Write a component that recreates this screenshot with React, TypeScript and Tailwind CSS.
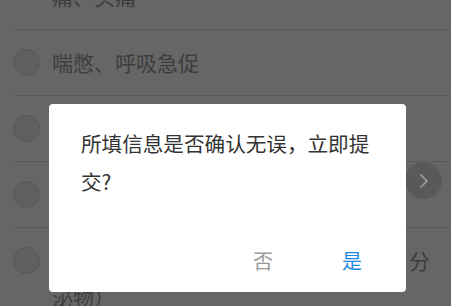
import React from "react";

const font = { fontFamily: '"Noto Sans CJK SC", "Noto Sans", sans-serif' };

function Radio() {
  return (
    <span className="mt-[5px] h-[27px] w-[27px] shrink-0 rounded-full border border-[#dadada] bg-[#eeeeee]" />
  );
}

function Row({ lines }: { lines: string[] }) {
  return (
    <div className="ml-[13px] flex gap-[12px] border-b border-[#e2e2e2] py-[14px] pr-[12px]">
      <Radio />
      <div className="text-[21px] leading-[37px] text-[#999999]">
        {lines.map((l, i) => (
          <div key={i} className="whitespace-nowrap">
            {l}
          </div>
        ))}
      </div>
    </div>
  );
}

export default function App() {
  return (
    <div className="relative h-[306px] w-[451px] overflow-hidden bg-white" style={font}>
      <div className="-mt-[73px]">
        <Row lines={["发热、寒战、乏力、肌肉酸痛、咽喉疼", "痛、头痛"]} />
        <Row lines={["喘憋、呼吸急促"]} />
        <Row lines={["咳嗽、咳痰、胸闷"]} />
        <Row lines={["腹泻、恶心、呕吐"]} />
        <Row lines={["其他症状（如结膜充血、皮疹、异常、分", "泌物）"]} />
      </div>

      <div className="absolute inset-0 bg-black/60" />

      <button className="absolute left-[405px] top-[162px] flex h-[37px] w-[37px] items-center justify-center rounded-full bg-black/[0.12]">
        <svg width="10" height="16" viewBox="0 0 10 16" fill="none">
          <path d="M1.5 1.5 L8 8 L1.5 14.5" stroke="#a0a0a0" strokeWidth="1.6" />
        </svg>
      </button>

      <div className="absolute left-[49px] top-[104px] flex h-[188px] w-[357px] flex-col rounded-[4px] bg-white">
        <div className="pl-[32px] pr-[24px] pt-[20px] text-[20.6px] leading-[38px] text-[#333333]">
          所填信息是否确认无误，立即提交?
        </div>
        <div className="mt-auto mb-[9px] flex h-[44px] items-center justify-end gap-[29px] pr-[24px] text-[20px]">
          <span className="w-[60px] text-center text-[#9a9a9a]">否</span>
          <span className="w-[60px] text-center text-[#1a8ae0]">是</span>
        </div>
      </div>
    </div>
  );
}
